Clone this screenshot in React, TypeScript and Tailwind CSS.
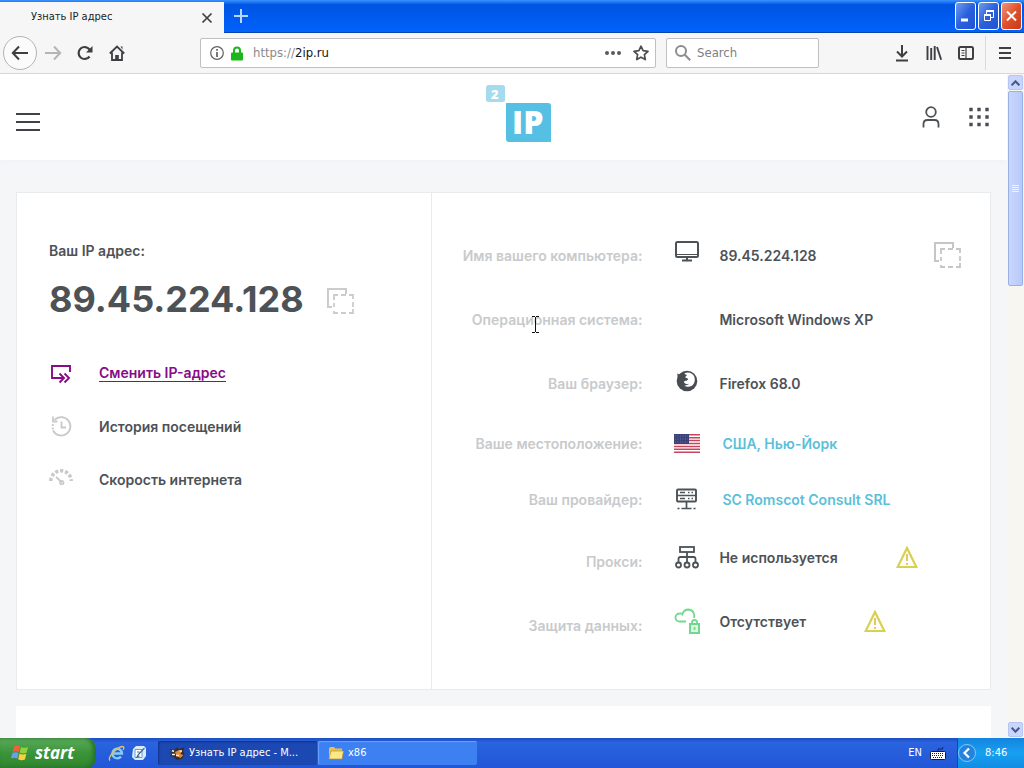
import { FC, ReactNode } from "react";

interface InfoRow {
  label: string;
  value: string;
  icon?: ReactNode;
  height: string;
  link?: boolean;
  warning?: boolean;
  copy?: boolean;
}

const CopyIcon: FC<{ className?: string }> = ({ className }) => (
  <svg width="28" height="28" viewBox="0 0 28 28" fill="none" stroke="currentColor" strokeWidth="2" className={className}>
    <path d="M6 20H2V2h18v5" />
    <path d="M8 13V8h4M15 8h5M23 8h4v4M27 15v5M27 22v4h-4M20 26h-5M12 26H8v-2M8 20v-4" strokeWidth="1.8" />
  </svg>
);

const WarningIcon = () => (
  <svg width="22" height="24" viewBox="0 0 22 24" fill="none" stroke="#d9d04e" strokeWidth="2.200">
    <path d="M11 3 20.300 22H1.700Z" />
    <path d="M11 9v7M11 18v2" stroke="#e0c766" strokeWidth="2" />
  </svg>
);

const MonitorIcon = () => (
  <svg width="24" height="22" viewBox="0 0 24 22" fill="none" stroke="#4d5257" className="relative -top-1">
    <rect x="1" y="2" width="22" height="15" rx="1.500" strokeWidth="2" />
    <path d="M1 14.500h22" strokeWidth="1" />
    <path d="M12 17v3M7 20.500h10" strokeWidth="2" />
  </svg>
);

const FirefoxIcon = () => (
  <svg width="22" height="22" viewBox="0 0 22 22" className="relative -top-0.5">
    <circle cx="11" cy="11" r="10.300" fill="#494d52" />
    <path d="M8.500 3.200C12 1.500 16 2.500 18 6c1.800 4 .3 8.500-2.500 10-2.600 1.300-5.500 1-7.200-.6 2 .2 3.800-.4 4.500-1.600-1.500.8-3.400.3-4.300-.8-1.200-1.600.3-2.500 2-2 .5-.9 1.200-1.200 1.700-1.600-.5-1.200-1.700-1.400-2.500-1.300-.6-1.300.2-2.300 1.500-3.100-1.300-.2-2.300-.7-2.700-1.800Z" fill="#fff" />
    <path d="M1.200 3.500 3.500 4.500 6 3.200 7 6 2 9.500Z" fill="#494d52" />
  </svg>
);

const FlagIcon = () => (
  <svg width="26" height="19" viewBox="0 0 26 19">
    <rect width="26" height="19" fill="#fff" />
    <path d="M0 .75h26M0 3.700h26M0 6.600h26M0 9.500h26M0 12.400h26M0 15.300h26M0 18.250h26" stroke="#c6455b" strokeWidth="1.500" />
    <rect width="15" height="10" fill="#3c4278" />
    <path d="M1 2h13M1 5h13M1 8h13" stroke="#7d83ad" strokeWidth=".7" strokeDasharray="1 1.500" />
  </svg>
);

const ServerIcon = () => (
  <svg width="24" height="22" viewBox="0 0 24 22" fill="none" stroke="#4d5257" strokeWidth="1.900">
    <rect x="2" y="1.500" width="19" height="12" rx="1" />
    <path d="M2 7.500h19M5 4.500h5M13 4.500h1.500M16.500 4.500h1.500M5 10.500h5M13 10.500h1.500M16.500 10.500h1.500M11.500 13v7M6.500 20.500h10M2.500 20.500h2M18.500 20.500h2" strokeWidth="1.700" />
  </svg>
);

const NetworkIcon = () => (
  <svg width="24" height="24" viewBox="0 0 24 24" fill="none" stroke="#4d5257" strokeWidth="1.800">
    <rect x="5" y="2" width="14" height="5" />
    <path d="M12 7v10M3.500 17v-3q0-2 2-2h13q2 0 2 2v3" />
    <circle cx="3.500" cy="20" r="2.500" />
    <circle cx="12" cy="20" r="2.500" />
    <circle cx="20.500" cy="20" r="2.500" />
  </svg>
);

const CloudLockIcon = () => (
  <svg width="26" height="26" viewBox="0 0 26 26" fill="none" stroke="#6fda8c" strokeWidth="1.800">
    <path d="M12 13.500H5.500a4 4 0 0 1 0-8Q7.500 5.300 8.300 6.300 10 1.500 14.500 1.500q5 .5 5.700 5.500v3" />
    <rect x="16" y="16" width="9" height="9" fill="#dff7e5" strokeWidth="2" />
    <path d="M18 16v-2q.3-2 2.500-2t2.500 2v2M20.500 19v3" />
  </svg>
);

const rows: InfoRow[] = [
  { label: "Имя вашего компьютера:", value: "89.45.224.128", icon: <MonitorIcon />, height: "h-16", copy: true },
  { label: "Операционная система:", value: "Microsoft Windows XP", height: "h-16" },
  { label: "Ваш браузер:", value: "Firefox 68.0", icon: <FirefoxIcon />, height: "h-16" },
  { label: "Ваше местоположение:", value: "США, Нью-Йорк", icon: <FlagIcon />, height: "h-14", link: true },
  { label: "Ваш провайдер:", value: "SC Romscot Consult SRL", icon: <ServerIcon />, height: "h-14", link: true },
  { label: "Прокси:", value: "Не используется", icon: <NetworkIcon />, height: "h-16", warning: true },
  { label: "Защита данных:", value: "Отсутствует", icon: <CloudLockIcon />, height: "h-16", warning: true },
];

const TitleBar = () => (
  <div className="flex h-[33px] shrink-0 items-start justify-between bg-linear-to-b from-[#3a93ff] from-0% via-[#0054e3] via-15% to-[#0062fb] border-b border-[#0843b0]">
    <div className="flex pt-0.5">
      <div className="flex h-[31px] w-56 items-center justify-between bg-[#f6f6f7] pr-[11px] pl-[31px] text-[11px] text-[#1c1c1e]">
        <span>Узнать IP адрес</span>
        <button aria-label="Close tab">
          <svg width="12" height="12" viewBox="0 0 12 12" stroke="#3f3f42" strokeWidth="1.700">
            <path d="m1.500 1.500 9 9m0-9-9 9" />
          </svg>
        </button>
      </div>
      <button aria-label="New tab" className="px-2.5 pb-1">
        <svg width="14" height="14" viewBox="0 0 14 14" stroke="#b5d8ff" strokeWidth="2">
          <path d="M7 0v14M0 7h14" />
        </svg>
      </button>
    </div>
    <div className="flex gap-0.5 pt-0.5 pr-0.5">
      <button aria-label="Minimize" className="flex h-7 w-[21px] items-center justify-center rounded-[3px] border border-white bg-linear-to-br from-[#6e9bf0] via-[#2a5fdd] to-[#2153cf]">
        <svg width="15" height="16" viewBox="0 0 15 16">
          <path d="M3 12h7" stroke="#fff" strokeWidth="3" />
        </svg>
      </button>
      <button aria-label="Restore" className="flex h-7 w-[21px] items-center justify-center rounded-[3px] border border-white bg-linear-to-br from-[#6e9bf0] via-[#2a5fdd] to-[#2153cf]">
        <svg width="15" height="16" viewBox="0 0 15 16" fill="none" stroke="#fff">
          <path d="M5.500 6V3.500h7v6H10" />
          <path d="M5 3h8M3 7h7" strokeWidth="2" />
          <path d="M3.500 7.500h6v5h-6Z" />
        </svg>
      </button>
      <button aria-label="Close" className="flex h-7 w-[21px] items-center justify-center rounded-[3px] border border-white bg-linear-to-br from-[#ef9375] via-[#e0502c] to-[#c33c15]">
        <svg width="15" height="16" viewBox="0 0 15 16" stroke="#fff" strokeWidth="2">
          <path d="m3 3.500 9 9m0-9-9 9" />
        </svg>
      </button>
    </div>
  </div>
);

const NavBar = () => (
  <div className="flex h-[41px] shrink-0 items-center border-b border-[#d8d8da] bg-[#f6f6f7] pl-[3px] text-[13px] text-[#3f3f42]">
    <button aria-label="Back" className="flex size-[34px] items-center justify-center rounded-full border border-[#b3b3b5] bg-[#fbfbfc]">
      <svg width="18" height="16" viewBox="0 0 18 16" fill="none" stroke="currentColor" strokeWidth="2">
        <path d="M17 8H2M8 1.500 1.800 8 8 14.500" />
      </svg>
    </button>
    <button aria-label="Forward" className="ml-[7px]">
      <svg width="18" height="16" viewBox="0 0 18 16" fill="none" stroke="#b5b5b7" strokeWidth="2">
        <path d="M1 8h15M10 1.500 16.200 8 10 14.500" />
      </svg>
    </button>
    <button aria-label="Reload" className="ml-[15px]">
      <svg width="16" height="16" viewBox="0 0 16 16" fill="none" stroke="currentColor" strokeWidth="2.200">
        <path d="M12.500 11.500A6 6 0 1 1 12.500 4.500" />
        <path d="M15.500 1v6.500H9Z" fill="currentColor" stroke="none" />
      </svg>
    </button>
    <button aria-label="Home" className="ml-4">
      <svg width="16" height="16" viewBox="0 0 16 16" fill="none" stroke="currentColor" strokeWidth="1.800">
        <path d="M.8 8.500 8 1.500l7.200 7M3 7.500v7.500h10V7.500" />
        <path d="M6.200 15v-5h3.600v5ZM11.500 1.500h2v3" fill="currentColor" stroke="none" />
      </svg>
    </button>
    <div className="ml-[75px] flex h-[30px] min-w-0 flex-1 items-center rounded-[2px] border border-[#c0c0c2] bg-white pr-1.5 pl-[9px]">
      <svg width="14" height="14" viewBox="0 0 14 14" fill="none" stroke="#606063" className="shrink-0">
        <circle cx="7" cy="7" r="6.300" strokeWidth="1.200" />
        <path d="M7 6v5M7 3v1.800" strokeWidth="1.700" />
      </svg>
      <svg width="12" height="15" viewBox="0 0 12 15" className="ml-[7px] shrink-0">
        <path d="M3 7V4.500a3 3 0 0 1 6 0V7" fill="none" stroke="#1cb51c" strokeWidth="2" />
        <rect y="6.500" width="12" height="8" rx="1" fill="#1cb51c" />
      </svg>
      <div className="relative ml-2.5 h-full min-w-0 flex-1">
        <input
          aria-label="Address"
          defaultValue="https://2ip.ru"
          className="h-full w-full bg-transparent text-transparent outline-none"
        />
        {/* host part is darker than the scheme */}
        <span aria-hidden="true" className="pointer-events-none absolute inset-0 flex items-center text-[#8a8a8d]">
          https://<span className="text-[#141416]">2ip.ru</span>
        </span>
      </div>
      <button aria-label="Page actions">
        <svg width="16" height="6" viewBox="0 0 16 6" fill="#5a5a5d">
          <circle cx="2" cy="3" r="2" />
          <circle cx="8" cy="3" r="2" />
          <circle cx="14" cy="3" r="2" />
        </svg>
      </button>
      <button aria-label="Bookmark" className="ml-3">
        <svg width="16" height="16" viewBox="0 0 16 16" fill="none" stroke="#4d4d50" strokeWidth="1.700" strokeLinejoin="round">
          <path d="m8 1.200 2.100 4.500 4.900.6-3.600 3.400.9 4.900L8 12.200l-4.300 2.400.9-4.900L1 6.300l4.900-.6Z" />
        </svg>
      </button>
    </div>
    <label className="ml-2.5 flex h-[30px] w-[153px] items-center gap-1.5 rounded-[2px] border border-[#c0c0c2] bg-white pl-2">
      <svg width="16" height="16" viewBox="0 0 16 16" fill="none" stroke="#8c8c8f" strokeWidth="2" className="shrink-0">
        <circle cx="6" cy="6" r="5" />
        <path d="m9.800 9.800 5.400 5.400" />
      </svg>
      <input aria-label="Search" placeholder="Search" className="w-full min-w-0 outline-none placeholder:text-[#808083]" />
    </label>
    <div className="ml-[75px] flex items-center gap-4">
      <button aria-label="Downloads">
        <svg width="16" height="18" viewBox="0 0 16 18" fill="none" stroke="currentColor" strokeWidth="2">
          <path d="M8 1v11M3 7.500l5 5 5-5M2 16.500h12" />
        </svg>
      </button>
      <button aria-label="Library">
        <svg width="16" height="16" viewBox="0 0 16 16" fill="none" stroke="currentColor" strokeWidth="1.900">
          <path d="M1.500 1v14M5.200 3v12M8.700 1v14M11 2l4.200 12.800" />
        </svg>
      </button>
      <button aria-label="Sidebars">
        <svg width="16" height="16" viewBox="0 0 16 16" fill="none" stroke="currentColor">
          <rect x="1" y="2" width="14" height="12" rx="1.500" strokeWidth="2" />
          <path d="M8 2v12M3.500 5.500h3M3.500 8h3M3.500 10.500h3" strokeWidth="1.200" />
        </svg>
      </button>
    </div>
    <div className="ml-[11px] flex h-[34px] items-center border-l border-[#dadadc] px-[13px]">
      <button aria-label="Open menu">
        <svg width="12" height="14" viewBox="0 0 12 14" stroke="currentColor" strokeWidth="1.800">
          <path d="M0 2h12M0 7h12M0 12h12" />
        </svg>
      </button>
    </div>
  </div>
);

const SiteHeader = () => (
  <header className="grid h-[86px] shrink-0 grid-cols-[1fr_auto_1fr] items-center bg-white pr-[18px] pl-4 shadow-[0_1px_5px_#eef1f4]">
    <button aria-label="Меню" className="mt-2.5 justify-self-start">
      <svg width="24" height="20" viewBox="0 0 24 20" stroke="#3f4347" strokeWidth="2">
        <path d="M0 2h24M0 10h24M0 18h24" />
      </svg>
    </button>
    <a href="#" aria-label="2IP" className="self-start pt-[11px] pl-8">
      <svg width="66" height="58" viewBox="0 0 66 58" fontFamily="Open Sans, sans-serif" fontWeight="800" fill="#fff">
        <rect width="19" height="17" rx="2.500" fill="#a6dbed" />
        <path d="M20 18h42q3 0 3 3v36H23q-3 0-3-3Z" fill="#55c0e4" />
        <text x="5" y="14" fontSize="13">2</text>
        <text x="26" y="49" fontSize="32">IP</text>
      </svg>
    </a>
    <div className="flex items-center gap-[29px] justify-self-end">
      <button aria-label="Профиль">
        <svg width="18" height="24" viewBox="0 0 18 24" fill="none" stroke="#4d5155" strokeWidth="1.800">
          <circle cx="9" cy="7" r="4.800" />
          <path d="M1.500 22.500v-3.500q0-4 4-4h7q4 0 4 4v3.500" />
        </svg>
      </button>
      <button aria-label="Сервисы">
        <svg width="20" height="20" viewBox="0 0 20 20" stroke="#4a4e52" strokeWidth="3.400" strokeDasharray="3.400 4.600">
          <path d="M.3 2.500H20M.3 10H20M.3 17.500H20" />
        </svg>
      </button>
    </div>
  </header>
);

const AddressPanel = () => (
  <section className="border-r border-[#e8ebed] pt-12 pl-8">
    <h2 className="text-[14px] leading-5 font-semibold">Ваш IP адрес:</h2>
    <div className="mt-2.5 flex items-center gap-[22px]">
      <div className="text-[36px] leading-14 font-bold">89.45.224.128</div>
      <button aria-label="Копировать IP" className="mt-1 text-[#cccccd]">
        <CopyIcon />
      </button>
    </div>
    <ul className="mt-5 text-[14px] font-semibold">
      <li className="flex h-[53px] items-center gap-[26px]">
        <svg width="24" height="20" viewBox="0 0 24 20" fill="none" stroke="#870c87" strokeWidth="1.900">
          <path d="M9 14H3V2h18v6M7 14h7M10.500 9.500l4.500 4.500-4.500 4.500M15.500 9.500 20 14l-4.500 4.500" />
        </svg>
        <a href="#" className="border-b border-[#870c87] leading-4 text-[#870c87]">Сменить IP-адрес</a>
      </li>
      <li className="flex h-[53px] items-center gap-[26px]">
        <svg width="24" height="22" viewBox="0 0 24 22" fill="none" stroke="#c7c9cb" strokeWidth="1.800">
          <path d="M5.500 4A9.200 9.200 0 1 1 4 14.500" />
          <path d="M4 .5v5h4.500M12.500 5.500v6H17" />
          <path d="M3.800 8v6" strokeDasharray="2 1.500" />
        </svg>
        <a href="#">История посещений</a>
      </li>
      <li className="flex h-[53px] items-center gap-[26px]">
        <svg width="24" height="22" viewBox="0 0 24 22" fill="none" stroke="#c7c9cb">
          <path d="M1.800 12a10.200 10.200 0 0 1 20.400 0" strokeWidth="3.500" strokeDasharray="3.200 1.800" />
          <path d="m7 8 6 5.500" strokeWidth="1.800" />
          <circle cx="12.800" cy="13.500" r="1.800" strokeWidth="1.600" />
        </svg>
        <a href="#">Скорость интернета</a>
      </li>
    </ul>
  </section>
);

const InfoPanel = () => (
  <dl className="pt-[30px] pb-[34px] text-[14px] font-semibold">
    {rows.map((row) => (
      <div key={row.label} className={`flex items-center ${row.height}`}>
        <dt className={`w-[210px] shrink-0 text-right text-[#c8cacc] ${row.warning ? "pt-1" : ""}`}>{row.label}</dt>
        <dd className={`ml-8 flex flex-1 items-center pr-[29px] ${row.warning ? "pb-1" : ""}`}>
          <span className="mr-[19px] flex w-[26px] shrink-0 justify-center">{row.icon}</span>
          {row.link ? (
            <a href="#" className="pl-[3px] text-[#5bbfd9]">{row.value}</a>
          ) : (
            <span>{row.value}</span>
          )}
          {row.warning && <span className="ml-[58px]"><WarningIcon /></span>}
          {row.copy && (
            <button aria-label="Копировать имя" className="ml-auto text-[#c4c6c7]">
              <CopyIcon />
            </button>
          )}
        </dd>
      </div>
    ))}
  </dl>
);

const ScrollBar = () => (
  <div className="flex w-[17px] shrink-0 flex-col bg-[#f7f6f1] px-px py-px">
    <button aria-label="Scroll up" className="flex h-[15px] items-center justify-center rounded-[2px] border border-[#b5c5f5] bg-[#c8d6fb]">
      <svg width="9" height="6" viewBox="0 0 9 6" fill="none" stroke="#44598c" strokeWidth="2"><path d="m.7 5.300 3.800-4 3.800 4" /></svg>
    </button>
    <div className="mt-px flex h-[195px] items-center justify-center rounded-[2px] border border-[#98b0e8] bg-linear-to-r from-[#cad7fd] to-[#b8c9fa]">
      <svg width="7" height="8" viewBox="0 0 7 8" stroke="#eef4fe"><path d="M0 .5h7M0 2.500h7M0 4.500h7M0 6.500h7" /></svg>
    </div>
    <button aria-label="Scroll down" className="mt-auto flex h-[15px] items-center justify-center rounded-[2px] border border-[#b5c5f5] bg-[#c8d6fb]">
      <svg width="9" height="6" viewBox="0 0 9 6" fill="none" stroke="#44598c" strokeWidth="2"><path d="m.7.7 3.800 4 3.800-4" /></svg>
    </button>
  </div>
);

const TaskBar = () => (
  <footer className="flex h-[30px] shrink-0 items-stretch bg-linear-to-b from-[#1d4fc0] from-0% via-[#2a62df] via-15% to-[#2157d6] text-[11px] text-white">
    <button className="flex w-24 items-center gap-1.5 rounded-r-[10px] bg-linear-to-b from-[#5cab5c] via-[#3a9439] to-[#2f852e] pl-[11px] font-['Open_Sans',sans-serif] text-[17px] font-bold italic shadow-[inset_-3px_0_4px_#25702a]">
      <svg width="18" height="18" viewBox="0 0 18 18">
        <path d="M3 2.500Q6 .5 9 2.500L7.800 8Q5 6.300 1.600 8Z" fill="#ef6237" />
        <path d="M10 3q3 1.700 7 0l-1.500 5.700q-3.500 1.600-6.800-.2Z" fill="#8fd13f" />
        <path d="M1.400 9q3.300-1.600 6.200 0l-1.300 5.700Q3.500 13 0 14.500Z" fill="#6d9cf0" />
        <path d="M8.500 9.500q3.200 1.700 6.800.2L14 15.500q-3.500 1.700-6.800-.2Z" fill="#fad03c" />
      </svg>
      start
    </button>
    <div className="ml-3 flex items-center gap-1.5">
      <button aria-label="Internet Explorer">
        <svg width="17" height="17" viewBox="0 0 17 17" fill="none">
          <path d="M13 11.500a4.800 4.800 0 1 1 1-3H5" stroke="#86ccfa" strokeWidth="2.400" />
          <path d="M2 15.500c-3-3 7-13.500 12.500-14 2 0 1.500 2 .5 3.500" stroke="#e9c24b" strokeWidth="1.300" />
        </svg>
      </button>
      <button aria-label="Show desktop">
        <svg width="16" height="16" viewBox="0 0 16 16" fill="none">
          <path d="M2 4 5 1h8l2 2v8l-3 4H4l-3-3Z" fill="#d8ebf9" />
          <path d="M4 4.500h7v8H4Z" fill="#fff" stroke="#6c9cc6" />
          <path d="m7 10 6.500-7M7 10l-1 2 2.500-1M6 7h2.500" stroke="#3d6c9b" strokeWidth="1.200" />
        </svg>
      </button>
    </div>
    <div className="ml-[11px] flex min-w-0 flex-1 gap-px py-[3px]">
      <button className="flex w-[159px] items-center gap-1 rounded-[2px] bg-[#1c48b2] pl-3 shadow-[inset_1px_1px_2px_#10328a]">
        <svg width="15" height="15" viewBox="0 0 15 15">
          <path d="M0 2.500 4 4l3-2.500L9 3l5.500-1.500L13 5l1.500 3-2 4.500L7 14l-3.500-3L0 10l2-2.500-2-1 2-1Z" fill="#3a2c28" />
          <path d="M5 6l4-2 3 1.500L10.500 8l3 1-3 3-4-2Z" fill="#d98b45" />
          <path d="M2 8.500h3M6 9.500h3M9.500 5h2.500M2 4.500l2 1" stroke="#fff3df" strokeWidth="1.400" />
        </svg>
        Узнать IP адрес - M...
      </button>
      <button className="flex w-[159px] items-center gap-1 rounded-[2px] bg-[#3c80f2] pl-2.5 shadow-[inset_1px_1px_1px_#6ba1f8]">
        <svg width="16" height="14" viewBox="0 0 16 14">
          <path d="M1 2.500 2 1h4l1.500 1.500H14V12H1Z" fill="#e8c04a" />
          <path d="M3 5h12.500L14 13H1Z" fill="#fce889" stroke="#b8922e" strokeWidth=".7" />
        </svg>
        x86
      </button>
    </div>
    <div className="flex items-center gap-2 pr-1">
      <span>EN</span>
      <svg width="16" height="14" viewBox="0 0 16 14">
        <path d="M8 5Q7 2 10 3t3-2" fill="none" stroke="#17245c" />
        <rect x=".5" y="5.500" width="15" height="8" rx="1" fill="#fff" stroke="#111b40" />
        <path d="M2 7.500h12M2 9.500h12M3 11.500h10" stroke="#1b2238" strokeDasharray="1 1" />
      </svg>
    </div>
    <div className="ml-[7px] flex w-[67px] items-center border-l border-[#0d4da8] bg-linear-to-b from-[#1584e0] via-[#17a0f0] to-[#128ce4]">
      <button aria-label="Show hidden icons" className="-ml-px">
        <svg width="20" height="20" viewBox="0 0 20 20" fill="none">
          <circle cx="10" cy="10" r="8.500" fill="#2383de" stroke="#83c7f8" />
          <path d="m12 5.500-4.500 4.500 4.500 4.500" stroke="#fff" strokeWidth="2.200" />
        </svg>
      </button>
      <span className="ml-2">8:46</span>
    </div>
  </footer>
);

const App = () => (
  <div className="relative flex h-screen flex-col overflow-hidden bg-white font-['DejaVu_Sans_Condensed','DejaVu_Sans',sans-serif]">
    <TitleBar />
    <NavBar />
    <div className="flex min-h-0 flex-1">
      <div className="flex min-w-0 flex-1 flex-col overflow-hidden bg-[#f4f6f8] font-[Inter,sans-serif] text-[#4d5257]">
        <SiteHeader />
        <main className="px-4 pt-8">
          <div className="grid grid-cols-[415fr_557fr] border border-[#e8ebed] bg-white">
            <AddressPanel />
            <InfoPanel />
          </div>
          <div className="mt-4 h-16 bg-white" />
        </main>
      </div>
      <ScrollBar />
    </div>
    <TaskBar />
    {/* text cursor */}
    <svg width="9" height="17" viewBox="0 0 9 17" fill="none" stroke="#111" className="pointer-events-none absolute top-[316px] left-[531px]">
      <path d="M1 .5h3M5 .5h3M4.500 1v15M1 16.500h3M5 16.500h3" />
    </svg>
  </div>
);

export default App;
